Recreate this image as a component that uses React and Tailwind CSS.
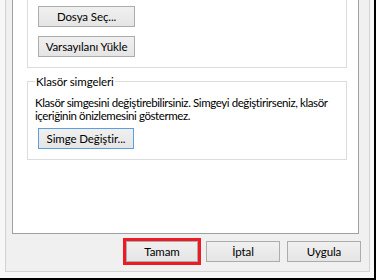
import React from 'react'

const font = { fontFamily: 'Lato, "Noto Sans", sans-serif' }

function WinButton({ children, focused, className = '' }) {
    return (
        <button
            className={`h-[21px] text-[11.5px] leading-none text-black tracking-[-0.1px] bg-gradient-to-b from-[#f0f0f0] to-[#e5e5e5] border ${focused ? 'border-[#5c9fe0]' : 'border-[#acacac]'} ${className}`}
        >
            {children}
        </button>
    )
}

export default function App() {
    return (
        <div style={font} className="w-[376px] h-[280px] bg-[#f7f7f7] border-r-2 border-b-2 border-black pl-[5px] pr-[4px] pb-[6px] flex flex-col text-[11px] text-black">
            <div className="flex-1 flex flex-col bg-[#f0f0f0] border-x border-b border-[#d4d4d4] pl-[6px] pr-[8px]">
                <div className="h-[234px] mr-[2px] bg-white border-x border-b border-[#a0a0a0] pl-[14px] pr-[11px]">
                    <div className="border-x border-b border-[#dcdcdc] pl-[10px] pt-[6px] pb-[10px] flex flex-col gap-[9px]">
                        <WinButton className="w-[97px]">Dosya Seç...</WinButton>
                        <WinButton className="w-[97px]">Varsayılanı Yükle</WinButton>
                    </div>
                    <fieldset className="mt-[6px] border border-[#dcdcdc] pl-[7px] pr-2 pb-[10px]">
                        <legend className="px-[1px] leading-[15px] text-[11.5px] tracking-[-0.1px]">Klasör simgeleri</legend>
                        <p className="leading-[13px] mt-[7px] whitespace-nowrap tracking-[-0.4px] text-[11.5px]">
                            Klasör simgesini değiştirebilirsiniz. Simgeyi değiştirirseniz, klasör<br />
                            içeriğinin önizlemesini göstermez.
                        </p>
                        <WinButton focused className="w-[96px] mt-[6px] ml-[3px]">Simge Değiştir...</WinButton>
                    </fieldset>
                </div>
                <div className="flex justify-end pt-[4px]">
                    <div className="border-[3px] border-[#ed1c24]">
                        <WinButton className="w-[72px] block">Tamam</WinButton>
                    </div>
                    <div className="pt-[3px] pl-[5px] flex gap-[7px]">
                        <WinButton className="w-[74px]">İptal</WinButton>
                        <WinButton className="w-[74px]">Uygula</WinButton>
                    </div>
                </div>
            </div>
        </div>
    )
}
